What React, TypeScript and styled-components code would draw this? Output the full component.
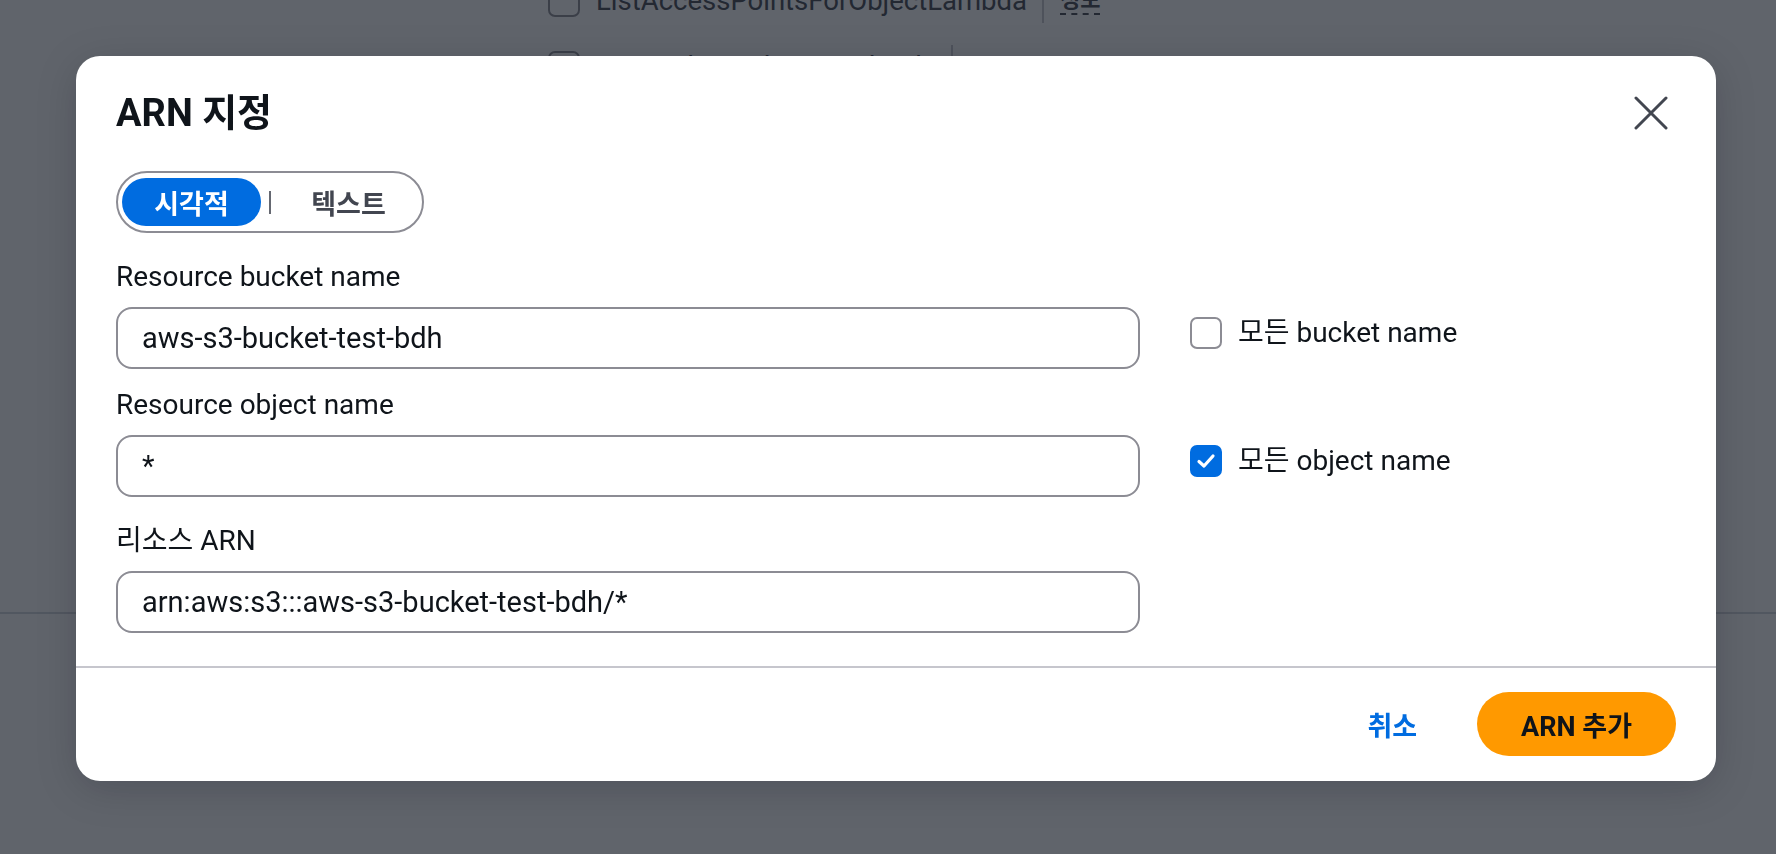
import React, { useState } from "react";
import styled, { createGlobalStyle } from "styled-components";

const GlobalStyle = createGlobalStyle`
  html, body {
    margin: 0;
    padding: 0;
    overflow: hidden;
    background: #ffffff;
    font-family: Roboto, "Noto Sans CJK KR", sans-serif;
  }
  * { box-sizing: border-box; }
`;

const FONT = `Roboto, "Noto Sans CJK KR", sans-serif`;

/* ---------- background page (behind the overlay) ---------- */
const Page = styled.div`
  position: relative;
  height: 100vh;
  overflow: hidden;
  background: #ffffff;
`;

const ActionList = styled.div`
  display: flex;
  flex-direction: column;
  gap: 26px;
  margin-top: -19px;
  padding-left: 548px;
  height: 633px;
  border-bottom: 2px solid #d1d5db;
`;

const ActionRow = styled.div`
  display: flex;
  align-items: center;
  gap: 16px;
  height: 40px;
`;

const BgCheckbox = styled.span`
  width: 32px;
  height: 32px;
  border: 2px solid #8c8c94;
  border-radius: 7px;
  flex: none;
`;

const ActionName = styled.span`
  font-family: ${FONT};
  font-size: 27.5px;
  line-height: 40px;
  color: #424650;
`;

const RowDivider = styled.span`
  width: 2px;
  height: 44px;
  background: #c6c6cd;
  margin-left: -1px;
`;

const InfoLink = styled.span`
  font-family: ${FONT};
  font-size: 22px;
  font-weight: 700;
  color: #424650;
  border-bottom: 2px dashed #424650;
  line-height: 26px;
`;

/* ---------- overlay + modal ---------- */
const Overlay = styled.div`
  position: fixed;
  inset: 0;
  background: rgba(20, 26, 37, 0.68);
  display: flex;
  justify-content: center;
  align-items: flex-start;
  padding: 56px 0 0 16px;
`;

const Modal = styled.div`
  width: 1640px;
  flex: none;
  background: #ffffff;
  border-radius: 24px;
  box-shadow: 0 8px 40px rgba(0, 7, 22, 0.18);
  font-family: ${FONT};
  color: #0f141a;
`;

const Header = styled.div`
  display: flex;
  align-items: center;
  justify-content: space-between;
  padding: 32px 40px 0 40px;
`;

const Title = styled.h2`
  margin: 0;
  font-size: 38px;
  line-height: 48px;
  font-weight: 700;
  color: #0f141a;
`;

const CloseButton = styled.button`
  width: 50px;
  height: 50px;
  padding: 0;
  border: none;
  background: transparent;
  display: flex;
  align-items: center;
  justify-content: center;
  cursor: pointer;
`;

const Body = styled.div`
  display: flex;
  flex-direction: column;
  gap: 24px;
  padding: 33px 40px 33px 40px;
`;

const Segmented = styled.div`
  align-self: flex-start;
  display: inline-flex;
  align-items: center;
  padding: 5px 4px;
  border: 2px solid #8c8c94;
  border-radius: 999px;
`;

const Segment = styled.button<{ $active?: boolean }>`
  width: 139px;
  height: 48px;
  border: none;
  border-radius: 999px;
  padding: 0;
  font-family: ${FONT};
  font-size: 27px;
  font-weight: 700;
  background: ${(p) => (p.$active ? "#006ce0" : "transparent")};
  color: ${(p) => (p.$active ? "#ffffff" : "#424650")};
  cursor: pointer;
`;

const SegDivider = styled.span`
  width: 2px;
  height: 23px;
  margin: 0 8px;
  background: #656871;
`;

const FormGrid = styled.div`
  display: grid;
  grid-template-columns: 1024px 1fr;
  column-gap: 50px;
  row-gap: 16px;
`;

const Field = styled.div<{ $extraTop?: number }>`
  display: flex;
  flex-direction: column;
  margin-top: ${(p) => p.$extraTop ?? 0}px;
`;

const Label = styled.label`
  font-size: 28px;
  line-height: 40px;
  margin-bottom: 10px;
  color: #0f141a;
`;

const Input = styled.input`
  width: 100%;
  height: 62px;
  padding: 0 24px;
  border: 2px solid #8c8c94;
  border-radius: 16px;
  font-family: ${FONT};
  font-size: 29px;
  color: #0f141a;
  background: #ffffff;
  outline: none;
`;

const CheckCell = styled.div`
  padding-top: 56px;
`;

const CheckLabel = styled.label`
  display: inline-flex;
  align-items: center;
  gap: 16px;
  font-size: 28px;
  line-height: 40px;
  color: #0f141a;
  cursor: pointer;
`;

const Box = styled.span<{ $checked?: boolean }>`
  width: 32px;
  height: 32px;
  border-radius: 7px;
  border: 2px solid ${(p) => (p.$checked ? "#006ce0" : "#8c8c94")};
  background: ${(p) => (p.$checked ? "#006ce0" : "#ffffff")};
  display: flex;
  align-items: center;
  justify-content: center;
  flex: none;
`;

const Footer = styled.div`
  display: flex;
  justify-content: flex-end;
  align-items: center;
  gap: 40px;
  padding: 24px 40px 25px 40px;
  border-top: 2px solid #c6c6cd;
`;

const LinkButton = styled.button`
  height: 64px;
  padding: 0 20px;
  border: none;
  background: transparent;
  font-family: ${FONT};
  font-size: 27px;
  font-weight: 700;
  color: #006ce0;
  cursor: pointer;
`;

const PrimaryButton = styled.button`
  height: 64px;
  padding: 0 44px;
  border: none;
  border-radius: 999px;
  background: #ff9900;
  font-family: ${FONT};
  font-size: 27px;
  font-weight: 700;
  color: #0f141a;
  cursor: pointer;
`;

function Checkbox({ checked, label, onToggle }: { checked: boolean; label: string; onToggle: () => void }) {
  return (
    <CheckLabel onClick={onToggle}>
      <Box $checked={checked}>
        {checked && (
          <svg width="24" height="24" viewBox="0 0 24 24" fill="none">
            <polyline points="5,12.5 10,17 19,7" stroke="#ffffff" strokeWidth="3.2" strokeLinecap="round" strokeLinejoin="round" />
          </svg>
        )}
      </Box>
      {label}
    </CheckLabel>
  );
}

export default function App() {
  const [mode, setMode] = useState<"visual" | "text">("visual");
  const [allBucket, setAllBucket] = useState(false);
  const [allObject, setAllObject] = useState(true);

  return (
    <>
      <GlobalStyle />
      <Page>
        <ActionList>
          <ActionRow>
            <BgCheckbox />
            <ActionName>ListAccessPointsForObjectLambda</ActionName>
            <RowDivider />
            <InfoLink>정보</InfoLink>
          </ActionRow>
          <ActionRow>
            <BgCheckbox />
            <ActionName>ListBucketMultipartUploads</ActionName>
            <RowDivider />
          </ActionRow>
        </ActionList>
      </Page>
      <Overlay>
        <Modal role="dialog" aria-label="ARN 지정">
          <Header>
            <Title>ARN 지정</Title>
            <CloseButton aria-label="닫기">
              <svg width="34" height="34" viewBox="0 0 34 34" fill="none">
                <path d="M2 2 L32 32 M32 2 L2 32" stroke="#424650" strokeWidth="3" strokeLinecap="round" />
              </svg>
            </CloseButton>
          </Header>
          <Body>
            <Segmented>
              <Segment $active={mode === "visual"} onClick={() => setMode("visual")}>시각적</Segment>
              <SegDivider />
              <Segment $active={mode === "text"} onClick={() => setMode("text")}>텍스트</Segment>
            </Segmented>
            <FormGrid>
              <Field>
                <Label>Resource bucket name</Label>
                <Input defaultValue="aws-s3-bucket-test-bdh" />
              </Field>
              <CheckCell>
                <Checkbox checked={allBucket} label="모든 bucket name" onToggle={() => setAllBucket(!allBucket)} />
              </CheckCell>
              <Field>
                <Label>Resource object name</Label>
                <Input defaultValue="*" />
              </Field>
              <CheckCell>
                <Checkbox checked={allObject} label="모든 object name" onToggle={() => setAllObject(!allObject)} />
              </CheckCell>
              <Field $extraTop={8}>
                <Label>리소스 ARN</Label>
                <Input defaultValue="arn:aws:s3:::aws-s3-bucket-test-bdh/*" />
              </Field>
            </FormGrid>
          </Body>
          <Footer>
            <LinkButton>취소</LinkButton>
            <PrimaryButton>ARN 추가</PrimaryButton>
          </Footer>
        </Modal>
      </Overlay>
    </>
  );
}
